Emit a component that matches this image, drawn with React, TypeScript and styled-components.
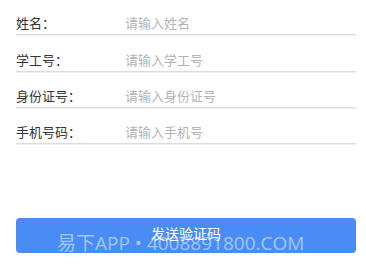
import React from "react";
import styled, { createGlobalStyle } from "styled-components";

const Global = createGlobalStyle`
  html, body { margin: 0; padding: 0; background: #ffffff; }
  body { font-family: "Noto Sans CJK SC", "Noto Sans", sans-serif; }
`;

const Page = styled.div`
  position: relative;
  width: 366px;
  height: 265px;
  overflow: hidden;
  background: #fff;
`;

const Form = styled.div`
  display: flex;
  flex-direction: column;
  margin: -1px 10px 0 16px;
`;

const Row = styled.div`
  display: flex;
  align-items: flex-end;
  box-sizing: border-box;
  height: 36.3px;
  padding-bottom: 3px;
  border-bottom: 1px solid #dcdcdc;
  box-shadow: 0 1px 0 #f0f0f0;
`;

const Label = styled.span`
  width: 109px;
  flex: none;
  font-size: 13px;
  line-height: 16px;
  color: #333333;
`;

const Input = styled.input`
  flex: 1;
  min-width: 0;
  border: none;
  outline: none;
  padding: 0;
  background: transparent;
  font-family: inherit;
  font-size: 13px;
  line-height: 16px;
  height: 16px;
  color: #333;
  &::placeholder { color: #b4b4b4; }
`;

const Footer = styled.div`
  display: flex;
  padding: 74px 10px 0 16px;
`;

const Button = styled.button`
  flex: 1;
  height: 35px;
  border: none;
  border-radius: 4px;
  background: #4a8cf6;
  color: #ffffff;
  font-family: inherit;
  font-size: 14px;
  line-height: 16px;
  padding: 0 0 5px;
`;

const Watermark = styled.div`
  position: absolute;
  left: 57px;
  top: 230px;
  font-family: "Open Sans", "Noto Sans CJK SC", sans-serif;
  font-size: 19px;
  line-height: 26px;
  color: rgba(255, 255, 255, 0.5);
  white-space: nowrap;
  pointer-events: none;
`;

const fields = [
  { label: "姓名：", placeholder: "请输入姓名" },
  { label: "学工号：", placeholder: "请输入学工号" },
  { label: "身份证号：", placeholder: "请输入身份证号" },
  { label: "手机号码：", placeholder: "请输入手机号" },
];

export default function App() {
  return (
    <Page>
      <Global />
      <Form>
        {fields.map((f) => (
          <Row key={f.label}>
            <Label>{f.label}</Label>
            <Input placeholder={f.placeholder} />
          </Row>
        ))}
      </Form>
      <Footer>
        <Button>发送验证码</Button>
      </Footer>
      <Watermark>易下APP • 4008891800.COM</Watermark>
    </Page>
  );
}
